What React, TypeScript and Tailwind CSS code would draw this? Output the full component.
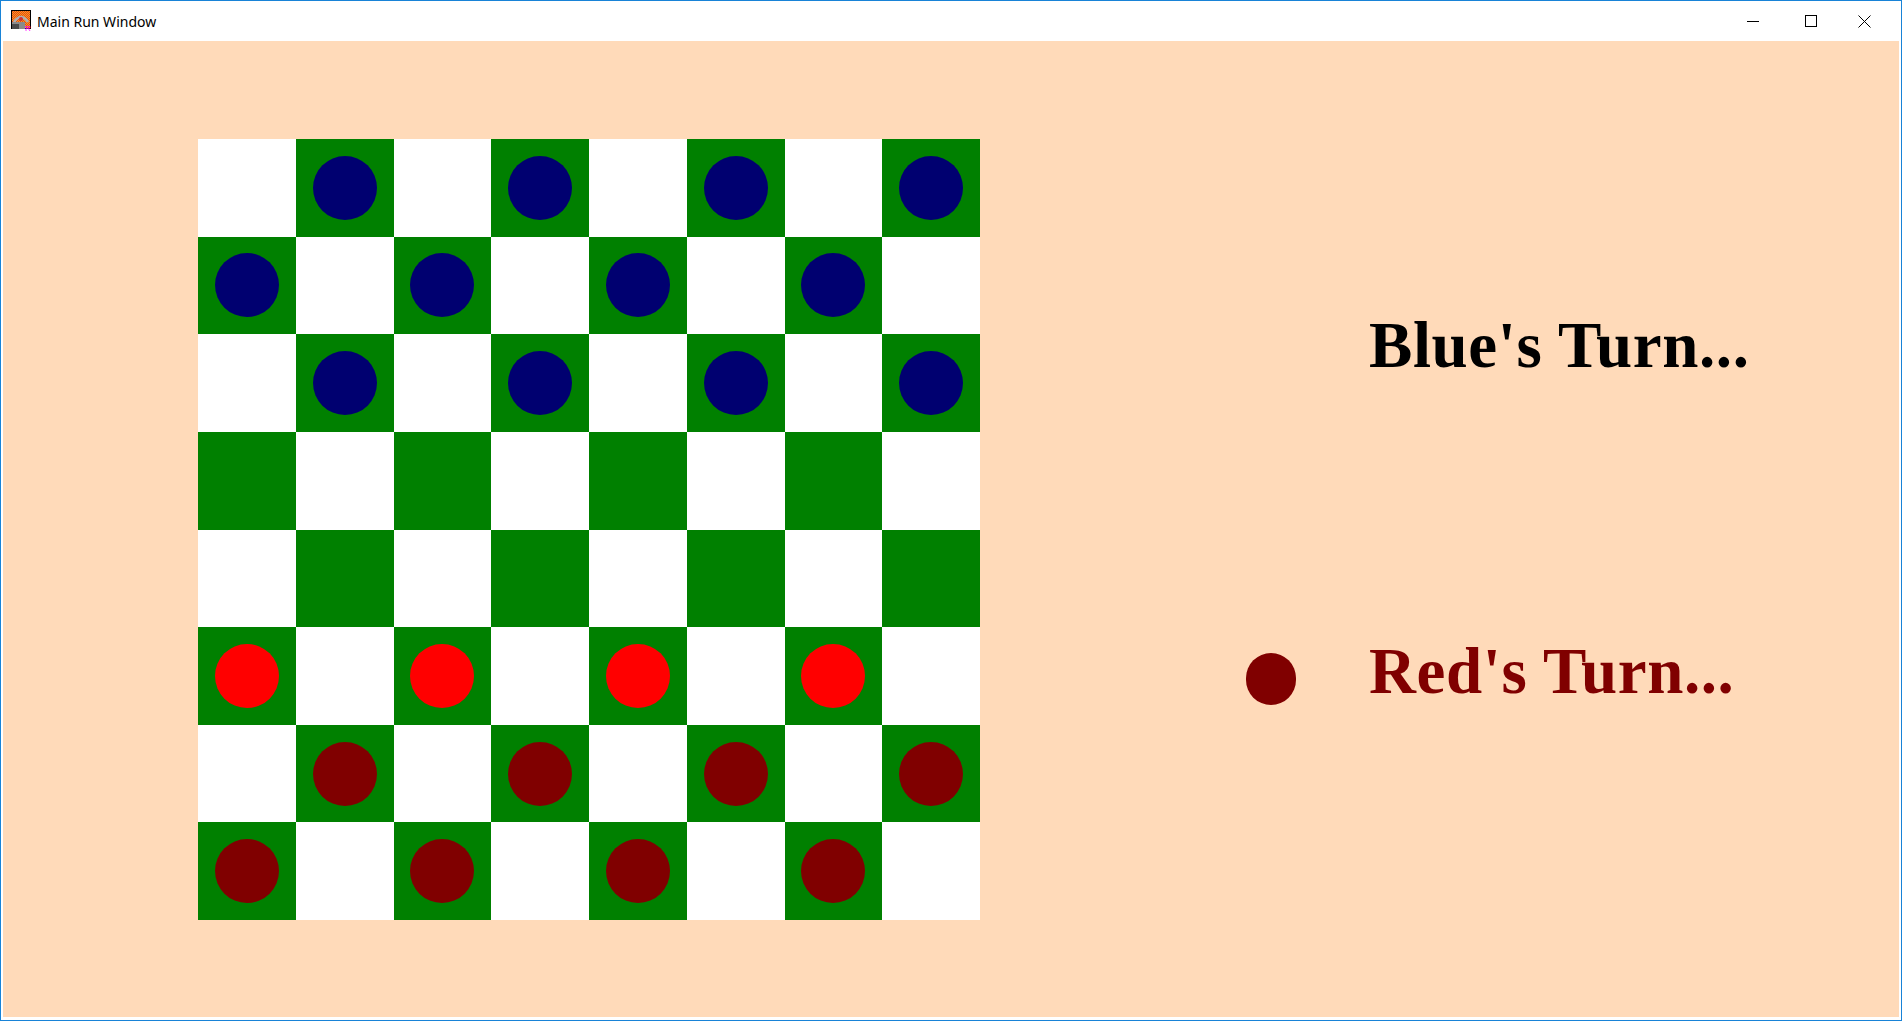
import React from "react";

type Piece = "blue" | "red" | "maroon" | null;

// board layout: rows top to bottom
const BOARD: Piece[][] = [
  [null, "blue", null, "blue", null, "blue", null, "blue"],
  ["blue", null, "blue", null, "blue", null, "blue", null],
  [null, "blue", null, "blue", null, "blue", null, "blue"],
  [null, null, null, null, null, null, null, null],
  [null, null, null, null, null, null, null, null],
  ["red", null, "red", null, "red", null, "red", null],
  [null, "maroon", null, "maroon", null, "maroon", null, "maroon"],
  ["maroon", null, "maroon", null, "maroon", null, "maroon", null],
];

const pieceClass: Record<string, string> = {
  blue: "bg-[#000070]",
  red: "bg-[#ff0000]",
  maroon: "bg-[#800000]",
};

function AppIcon() {
  return (
    <svg width="21" height="21" viewBox="0 0 21 21" className="shrink-0">
      <defs>
        <pattern id="chk" width="2" height="2" patternUnits="userSpaceOnUse">
          <rect width="2" height="2" fill="#f7a21b" />
          <rect width="1" height="1" fill="#e8401a" />
          <rect x="1" y="1" width="1" height="1" fill="#e8401a" />
        </pattern>
      </defs>
      <rect x="0.5" y="0.5" width="19" height="18" fill="url(#chk)" stroke="#000" />
      <path d="M3 12 Q10 2 17 12" fill="none" stroke="#b0b0b0" strokeWidth="2.5" />
      <circle cx="10" cy="9" r="2" fill="#d03030" />
      <rect x="1" y="12" width="13" height="7" fill="#8a8a8a" />
      <rect x="1" y="14" width="7" height="5" fill="#4a4a4a" />
      <text x="14" y="20.5" fontSize="8" fill="#ff00ff" fontFamily="Liberation Sans, sans-serif">
        R
      </text>
    </svg>
  );
}

function TitleBar() {
  return (
    <div className="flex h-[40px] items-center bg-white">
      <div className="ml-[10px] mt-[-1px]">
        <AppIcon />
      </div>
      <span className="ml-[5px] text-[14px] text-black font-['Noto_Sans',sans-serif]">
        Main Run Window
      </span>
      <div className="ml-auto flex h-full items-center">
        <div className="flex w-[48px] justify-center">
          <div className="h-px w-[12px] bg-black" />
        </div>
        <div className="ml-[10px] flex w-[48px] justify-center">
          <div className="h-[12px] w-[12px] border border-black" />
        </div>
        <div className="ml-[11px] mr-[19px] flex w-[36px] justify-center">
          <svg width="13" height="13" viewBox="0 0 13 13">
            <path d="M0.5 0.5 L12.5 12.5 M12.5 0.5 L0.5 12.5" stroke="#000" strokeWidth="1" />
          </svg>
        </div>
      </div>
    </div>
  );
}

function Board() {
  return (
    <div className="grid h-[781px] w-[782px] shrink-0 grid-cols-8 grid-rows-8">
      {BOARD.map((row, r) =>
        row.map((piece, c) => {
          const dark = (r + c) % 2 === 1;
          return (
            <div
              key={`${r}-${c}`}
              className={`flex items-center justify-center ${dark ? "bg-[#008000]" : "bg-white"}`}
            >
              {piece && <div className={`h-[64px] w-[64px] rounded-full ${pieceClass[piece]}`} />}
            </div>
          );
        }),
      )}
    </div>
  );
}

export default function App() {
  return (
    <div className="flex h-[1021px] w-[1902px] flex-col border border-[#1883d7] bg-white">
      <TitleBar />
      <div className="mx-[2px] mb-[3px] flex flex-1 items-start bg-[#ffdab9] pl-[195px] pt-[98px] font-['Liberation_Serif',serif] font-bold">
        <Board />
        <div className="ml-[266px] flex flex-col">
          <div className="mt-[174px] flex items-start">
            <div className="w-[50px]" />
            <span className="ml-[73px] text-[65px] leading-none tracking-[0.6px] text-black">
              Blue's Turn...
            </span>
          </div>
          <div className="mt-[261px] flex items-start">
            <div className="mt-[14px] h-[52px] w-[50px] rounded-full bg-[#800000]" />
            <span className="ml-[73px] text-[65px] leading-none tracking-[0.6px] text-[#800000]">
              Red's Turn...
            </span>
          </div>
        </div>
      </div>
    </div>
  );
}
